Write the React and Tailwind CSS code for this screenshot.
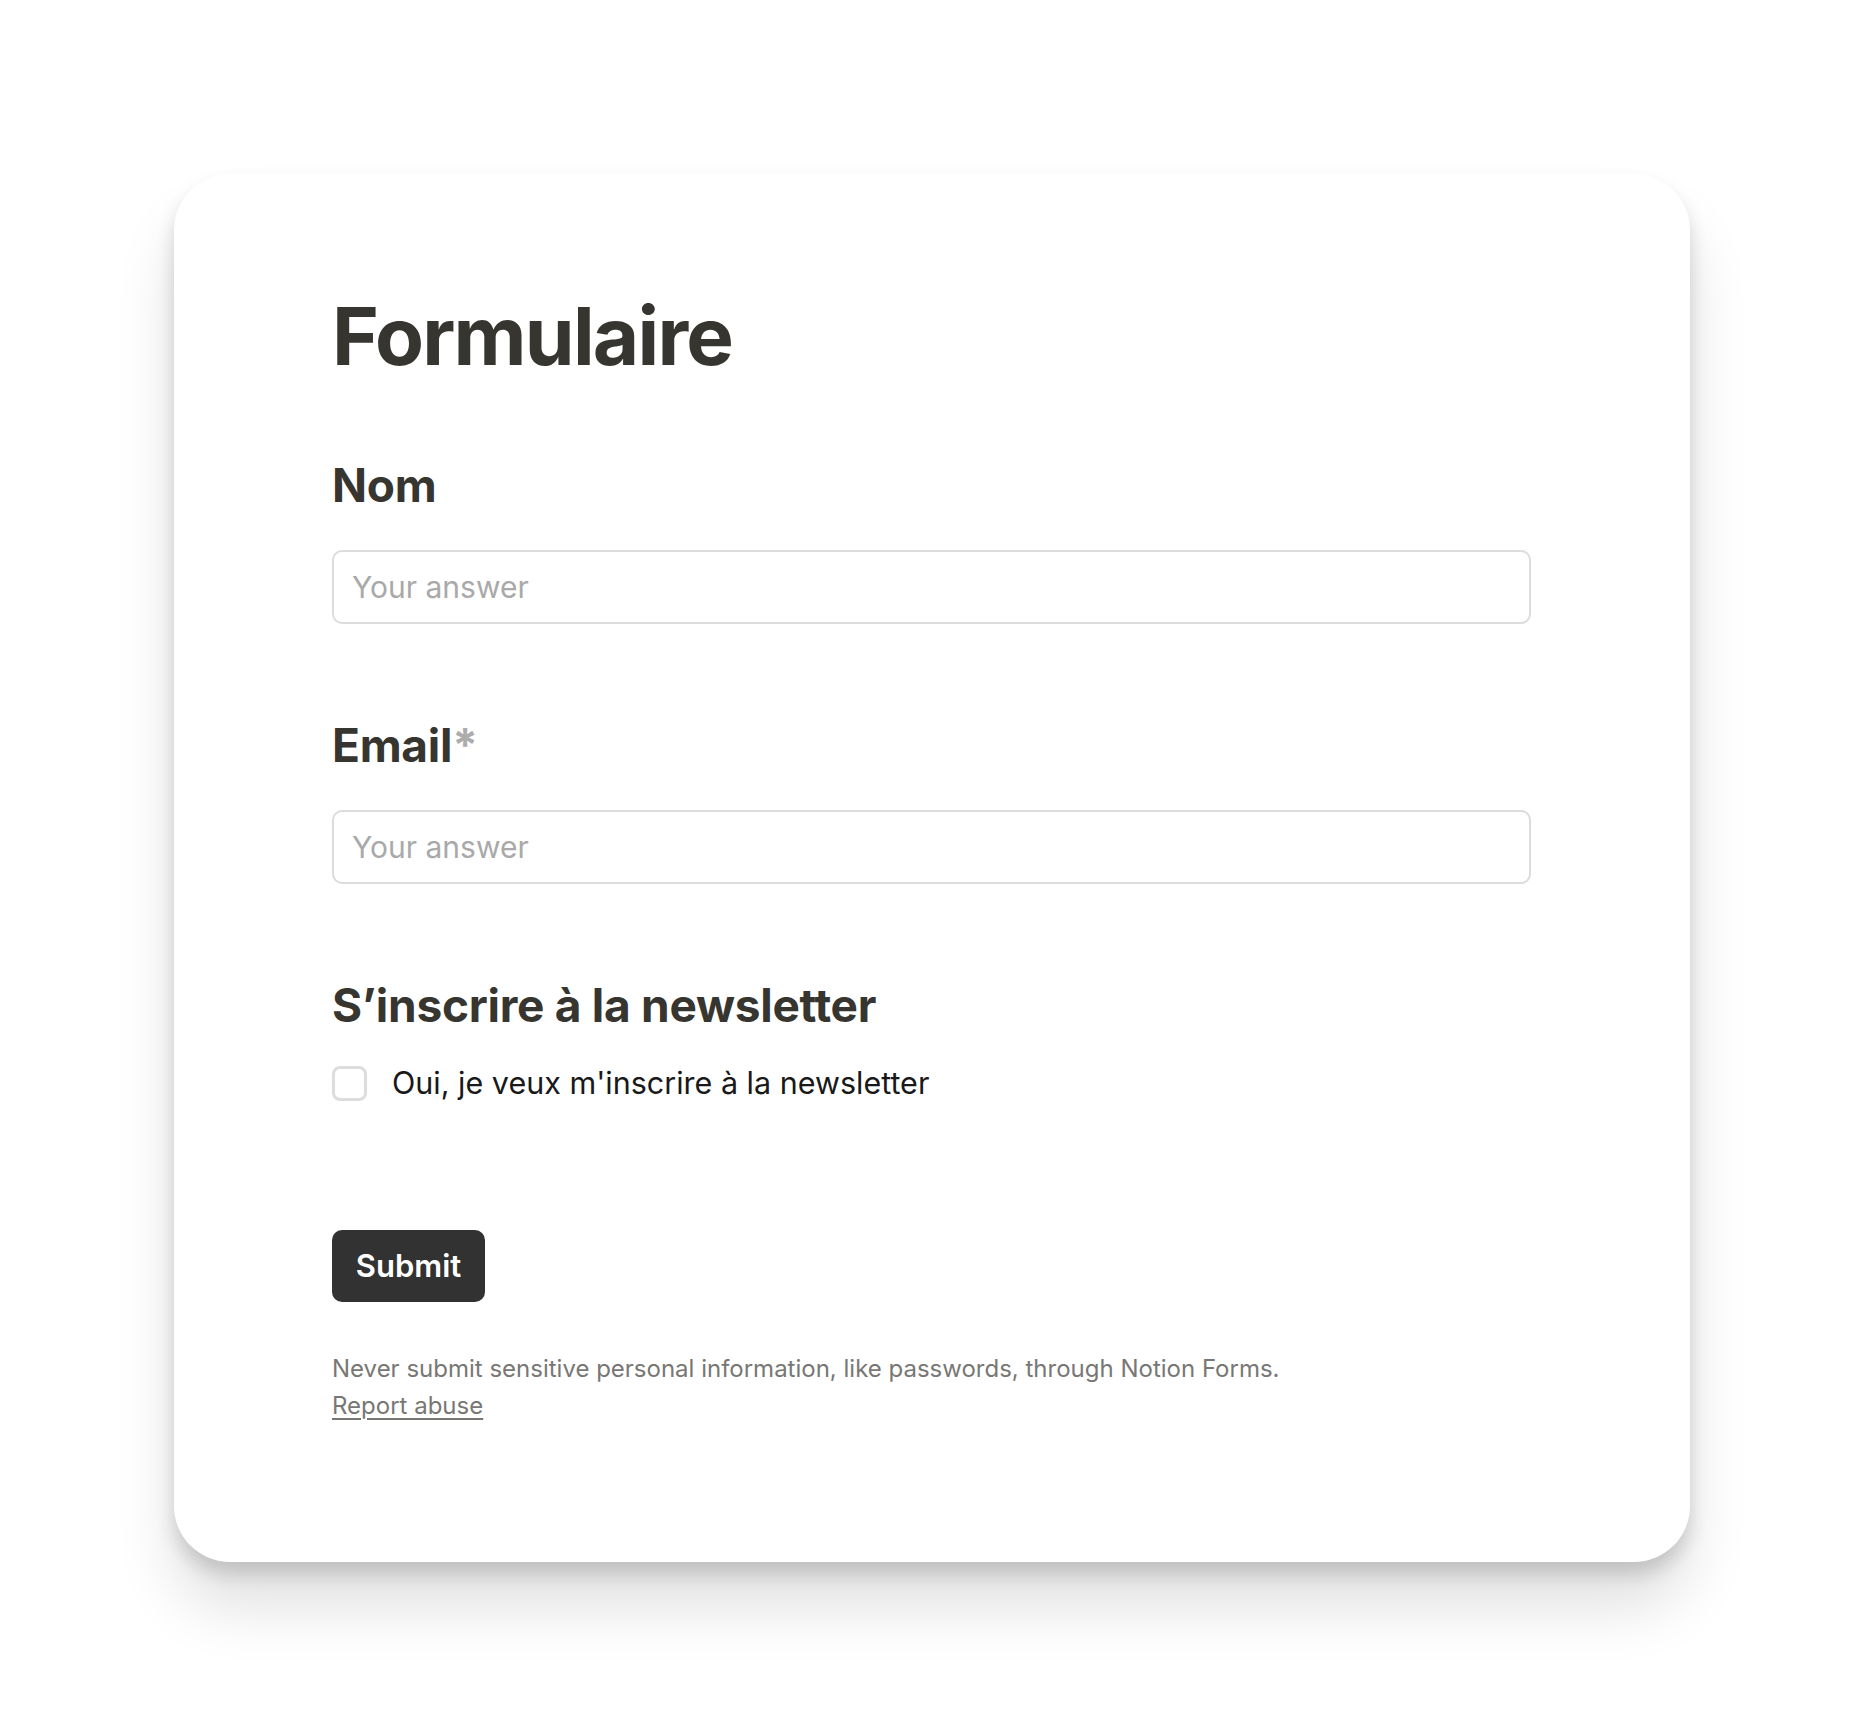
import { useState } from "react";

export default function App() {
  const [form, setForm] = useState({ nom: "", email: "", newsletter: false });

  const handleChange = (e) => {
    const { name, value, type, checked } = e.target;
    setForm({ ...form, [name]: type === "checkbox" ? checked : value });
  };

  const handleSubmit = (e) => {
    e.preventDefault();
  };

  return (
    <div
      className="min-h-[1736px] bg-white pt-[174px] pl-[174px]"
      style={{ fontFamily: "Inter, 'Noto Sans', sans-serif" }}
    >
      <div className="w-[1516px] h-[1388px] rounded-[56px] bg-white shadow-[0_45px_60px_rgba(0,0,0,0.12),0_12px_18px_rgba(0,0,0,0.15)] pl-[158px] pt-[114px]">
        <h1 className="text-[80px] leading-[96px] font-bold tracking-[-0.022em] text-[#37352f]">
          Formulaire
        </h1>

        <form onSubmit={handleSubmit} className="w-[1199px]">
          <label
            htmlFor="nom"
            className="block mt-[73px] text-[46px] leading-[56px] font-bold tracking-[-0.006em] text-[#37352f]"
          >
            Nom
          </label>
          <input
            id="nom"
            name="nom"
            type="text"
            value={form.nom}
            onChange={handleChange}
            placeholder="Your answer"
            className="block mt-[37px] w-full h-[74px] rounded-[10px] border-2 border-[#dcdcdc] px-[18px] text-[30px] text-[#37352f] placeholder:text-[#a9a9a9] outline-none"
          />

          <label
            htmlFor="email"
            className="block mt-[93px] text-[46px] leading-[56px] font-bold tracking-[-0.006em] text-[#37352f]"
          >
            Email<span className="text-[#acacac]">*</span>
          </label>
          <input
            id="email"
            name="email"
            type="email"
            value={form.email}
            onChange={handleChange}
            placeholder="Your answer"
            className="block mt-[37px] w-full h-[74px] rounded-[10px] border-2 border-[#dcdcdc] px-[18px] text-[30px] text-[#37352f] placeholder:text-[#a9a9a9] outline-none"
          />

          <div className="mt-[93px] text-[46px] leading-[56px] font-bold tracking-[-0.006em] text-[#37352f]">
            S’inscrire à la newsletter
          </div>
          <label className="mt-[30px] flex items-center gap-[25px] cursor-pointer">
            <input
              type="checkbox"
              name="newsletter"
              checked={form.newsletter}
              onChange={handleChange}
              className="appearance-none w-[35px] h-[35px] rounded-[8px] border-[3px] border-[#dddddd] bg-white"
            />
            <span className="text-[30.5px] leading-[40px] text-[#191919]">
              Oui, je veux m'inscrire à la newsletter
            </span>
          </label>

          <button
            type="submit"
            className="mt-[127px] block w-[153px] h-[72px] rounded-[10px] bg-[#323232] text-white text-[31px] font-semibold"
          >
            Submit
          </button>

          <p className="mt-[48px] text-[24px] leading-[37px] text-[#787774]">
            Never submit sensitive personal information, like passwords, through Notion Forms.
            <br />
            <a href="#" className="underline underline-offset-[4px]">
              Report abuse
            </a>
          </p>
        </form>
      </div>
    </div>
  );
}
